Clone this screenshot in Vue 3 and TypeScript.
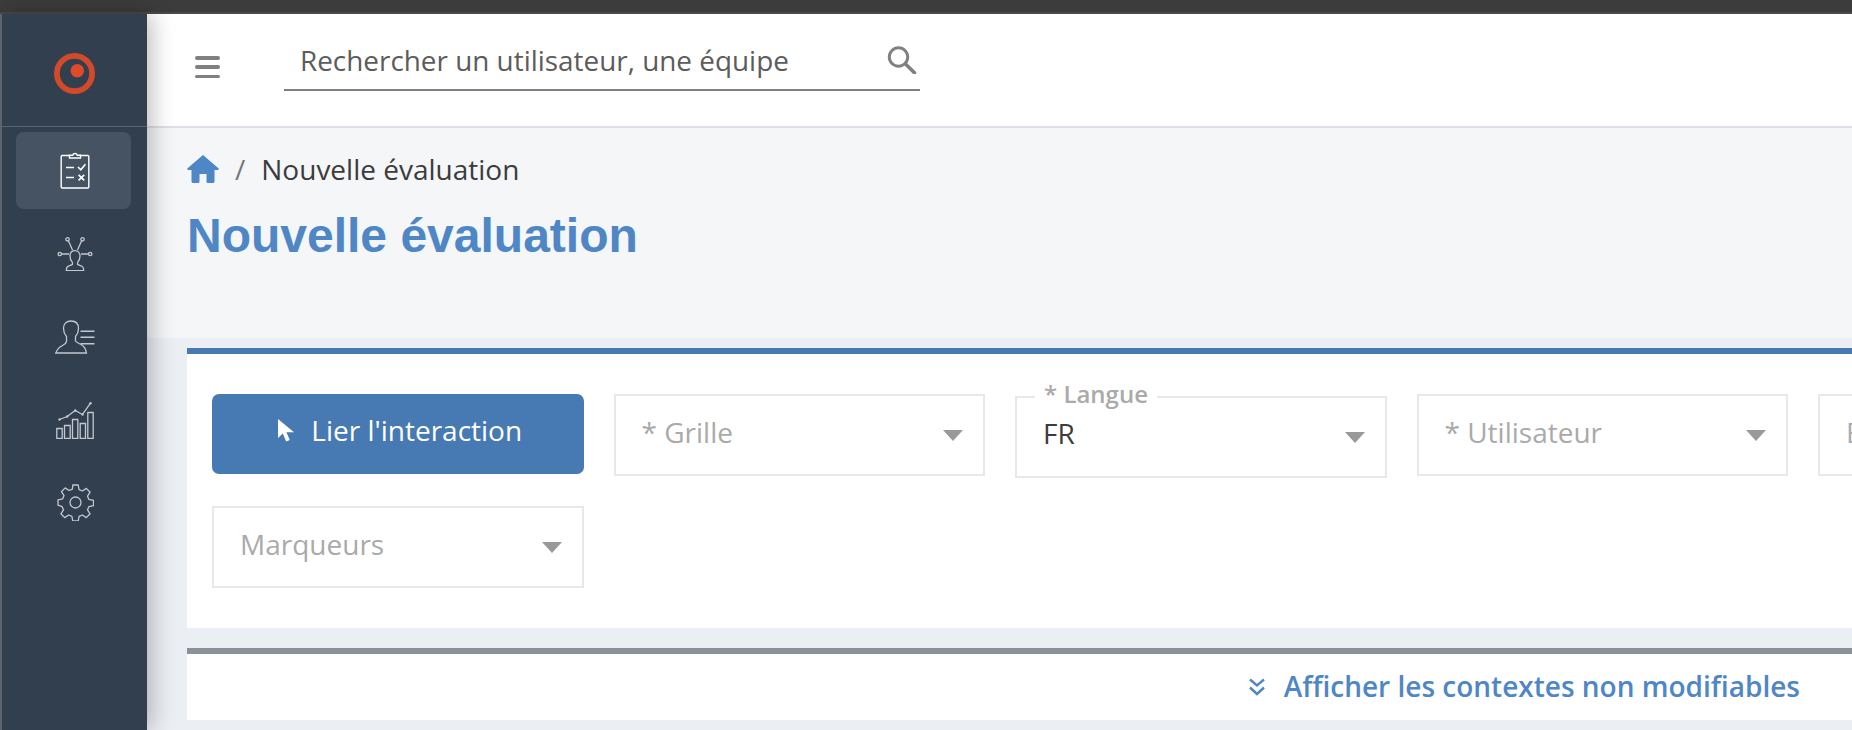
<script setup lang="ts">
interface Field { label: string; value?: string }
const firstRow: Field[] = [
  { label: '* Grille' },
  { label: '* Langue', value: 'FR' },
  { label: '* Utilisateur' },
  { label: 'Equipe' },
]
</script>

<template>
  <div class="app">
    <div class="topstrip"></div>
    <div class="shell">
      <aside class="sidebar">
        <div class="logo">
          <svg width="41" height="41" viewBox="0 0 40 40">
            <circle cx="20" cy="20" r="17.2" fill="none" stroke="#d24a2a" stroke-width="5.600" />
            <circle cx="22.7" cy="17.3" r="6.6" fill="#e0492a" />
          </svg>
        </div>
        <nav class="nav">
          <a class="nav-item active">
            <svg width="30" height="37" viewBox="0 0 30 37" fill="none" stroke="#fff" stroke-width="1.4">
              <path d="M10 3.5H2.2a1 1 0 0 0-1 1V35a1 1 0 0 0 1 1h25.6a1 1 0 0 0 1-1V4.5a1 1 0 0 0-1-1H20" />
              <path d="M9.5 6V3.2h3.2a2.4 2.4 0 0 1 4.6 0h3.2V6z" />
              <path d="M6 15.5h8M6 25.5h8" stroke-width="1.7" />
              <path d="m18 15 2.8 2.8 4.6-5.6M18.6 22.8l5.6 5.6M24.2 22.8l-5.6 5.6" stroke-width="1.7" />
            </svg>
          </a>
          <a class="nav-item">
            <svg width="36" height="35" viewBox="0 0 36 35" fill="none" stroke="#c3c8ce" stroke-width="1.3">
              <circle cx="10.500" cy="3.300" r="1.700" />
              <circle cx="25.500" cy="3.300" r="1.700" />
              <circle cx="2.800" cy="18" r="1.700" />
              <circle cx="33.200" cy="18" r="1.700" />
              <path d="m11.500 5 4 9M24.500 5l-4 9M4.600 18H12M24 18h7.400" />
              <path d="M18 14.700c-3 0-5 2-5 5.300 0 2.700 1 5 2.400 6.400v2c-1.600 1-4.200 1.200-5.200 2.600-.7 1-.9 2.400-.9 3.700h17.400c0-1.300-.2-2.700-.9-3.700-1-1.400-3.600-1.600-5.200-2.600v-2c1.400-1.400 2.400-3.700 2.400-6.400 0-3.300-2-5.300-5-5.300z" />
            </svg>
          </a>
          <a class="nav-item">
            <svg width="40" height="34" viewBox="0 0 40 34" fill="none" stroke="#c3c8ce" stroke-width="1.3">
              <path d="M11.500 16.500c-1.700-2-3-4.500-3-8C8.500 3.700 11.500 1 16 1s7.500 2.700 7.500 7.500c0 3.500-1.300 6-3 8V21c1 1.500 3.500 2.500 5.500 3.500 2.500 1.200 4.500 3 5.500 8.500H.8c1.500-4 4-6.300 6.700-7.500 2.200-1 3.500-1.700 4-4z" />
              <path d="M25.500 11.200h14M25.500 17.200h14M25.500 23.800h14" stroke-width="1.500" />
            </svg>
          </a>
          <a class="nav-item">
            <svg width="38" height="38" viewBox="0 0 38 38" fill="none" stroke="#c3c8ce" stroke-width="1.3">
              <path d="M.8 27.500h5.400v10H.8zM8.500 24.500h5.700v13H8.500zM16.500 18.500h5.300v19h-5.300zM24.200 22.500h5.300v15h-5.300zM31.800 11.500h5.400v26h-5.400z" />
              <path d="m3.500 18.500 7.700-3 8-6 7.300 4 8-11.300" />
              <g fill="#c3c8ce" stroke="none">
                <circle cx="3.500" cy="18.500" r="1.200" /><circle cx="11.200" cy="15.500" r="1.200" />
                <circle cx="19.200" cy="9.500" r="1.200" /><circle cx="26.500" cy="13.500" r="1.200" />
                <circle cx="34.500" cy="2.200" r="1.200" />
              </g>
            </svg>
          </a>
          <a class="nav-item">
            <svg width="37" height="37" viewBox="0 0 37 37" fill="none" stroke="#c3c8ce" stroke-width="1.300">
              <circle cx="18.500" cy="18.500" r="5.500" />
              <path d="M15.800 1h5.400l.9 4.600 3.300 1.400 3.900-2.600 3.800 3.800-2.600 3.900 1.400 3.300 4.600.9v5.400l-4.600.9-1.400 3.300 2.600 3.900-3.800 3.800-3.900-2.600-3.300 1.400-.9 4.600h-5.400l-.9-4.600-3.300-1.400-3.900 2.600-3.800-3.800 2.600-3.900-1.400-3.300L1 21.200v-5.400l4.600-.9L7 11.600 4.400 7.700l3.800-3.800 3.900 2.600 3.300-1.400z" stroke-linejoin="round" />
            </svg>
          </a>
        </nav>
      </aside>

      <main class="main">
        <header class="header">
          <button class="burger" aria-label="Menu"><span></span><span></span><span></span></button>
          <div class="search">
            <span class="search-text">Rechercher un utilisateur, une équipe</span>
            <svg width="30" height="28" viewBox="0 0 30 28" fill="none" stroke="#808080">
              <circle cx="11.500" cy="11" r="9.200" stroke-width="3" />
              <path d="m18.500 18 9 8.800" stroke-width="3.600" stroke-linecap="round" />
            </svg>
          </div>
        </header>

        <section class="page-head">
          <div class="crumbs">
            <svg width="32" height="28" viewBox="0 0 32 28" fill="#4f86c6">
              <path d="M16 0 31.400 13.200a1 1 0 0 1-.6 1.800H27.500v11.500A1.500 1.500 0 0 1 26 28h-5a1.500 1.500 0 0 1-1.500-1.500V19h-7v7.500A1.500 1.500 0 0 1 11 28H6a1.500 1.500 0 0 1-1.500-1.500V15H1.200a1 1 0 0 1-.6-1.800z" />
            </svg>
            <span class="slash">/</span>
            <span class="crumb">Nouvelle évaluation</span>
          </div>
          <h1 class="title">Nouvelle évaluation</h1>
        </section>

        <section class="content">
          <div class="card card-form">
            <div class="form-grid">
              <button class="link-btn">
                <svg width="18" height="24" viewBox="0 0 18 24" fill="#fff">
                  <path d="M1 1v19l4.800-4.400 3.400 8 3.600-1.500-3.400-7.800H17z" />
                </svg>
                <span>Lier l'interaction</span>
              </button>
              <div
                v-for="f in firstRow"
                :key="f.label"
                class="field"
                :class="{ filled: f.value }"
              >
                <span v-if="f.value" class="legend">{{ f.label }}</span>
                <span class="field-text" :class="{ value: f.value }">{{ f.value ?? f.label }}</span>
                <i class="caret"></i>
              </div>
              <div class="field">
                <span class="field-text">Marqueurs</span>
                <i class="caret"></i>
              </div>
            </div>
          </div>

          <div class="card card-more">
            <svg width="18" height="18" viewBox="0 0 18 18" fill="none" stroke="#4f86c6" stroke-width="2.400">
              <path d="m2 1.500 7 6 7-6M2 9.500l7 6.500 7-6.500" />
            </svg>
            <span class="more-text">Afficher les contextes non modifiables</span>
          </div>
        </section>
      </main>
    </div>
  </div>
</template>

<style>
html, body { margin: 0; height: 100%; overflow: hidden; }
</style>

<style scoped>
.app {
  width: 1852px;
  height: 730px;
  display: flex;
  flex-direction: column;
  overflow: hidden;
  font-family: "Open Sans", "Liberation Sans", sans-serif;
  background: #ebeef3;
}
.topstrip {
  height: 12px;
  flex: none;
  background: #3c3c3c;
  border-bottom: 2px solid #4a4a4a;
}
.shell { flex: 1; display: flex; min-height: 0; }

.sidebar {
  width: 145px;
  flex: none;
  background: #323f4f;
  border-left: 2px solid #5a636e;
  position: relative;
  z-index: 2;
  box-shadow: 4px 0 22px rgba(0, 0, 0, 0.28);
}
.logo {
  height: 113px;
  box-sizing: border-box;
  border-bottom: 1px solid #5a6470;
  display: flex;
  align-items: center;
  justify-content: center;
  padding-top: 7px;
}
.nav {
  display: flex;
  flex-direction: column;
  gap: 6px;
  padding: 5px 14px 0;
}
.nav-item {
  height: 77px;
  box-sizing: border-box;
  border-radius: 8px;
  display: flex;
  align-items: center;
  justify-content: center;
  width: 115px;
  padding-left: 3px;
}
.nav-item.active { background: #465362; }

.main { flex: 1; min-width: 0; display: flex; flex-direction: column; }
.header {
  height: 112px;
  flex: none;
  background: #fff;
  border-bottom: 2px solid #dde1e7;
  display: flex;
  align-items: flex-start;
  padding-left: 48px;
}
.burger {
  width: 25px;
  height: 22px;
  margin-top: 42px;
  padding: 0;
  border: 0;
  background: none;
  display: flex;
  flex-direction: column;
  justify-content: space-between;
}
.burger span {
  display: block;
  height: 3.500px;
  border-radius: 2px;
  background: #808080;
}
.search {
  width: 636px;
  height: 77px;
  margin-left: 64px;
  box-sizing: border-box;
  border-bottom: 2px solid #808080;
  display: flex;
  align-items: flex-start;
  justify-content: space-between;
  padding: 0 3px 0 16px;
}
.search-text {
  font-size: 27.900px;
  line-height: 34px;
  margin-top: 29px;
  color: #5c5c5c;
}
.search svg { margin-top: 32px; }

.page-head {
  height: 210px;
  flex: none;
  box-sizing: border-box;
  background: #f4f6f8;
  padding: 27px 0 0 40px;
}
.crumbs { display: flex; align-items: center; height: 28px; }
.slash { margin-left: 16px; font-size: 28px; color: #777; }
.crumb { margin-left: 16px; font-size: 28px; color: #3c3c3c; }
.title {
  margin: 23px 0 0 0;
  font-family: "Liberation Sans", Arial, sans-serif;
  font-size: 48px;
  line-height: 60px;
  font-weight: 700;
  color: #4f86c6;
}

.content { flex: 1; padding: 10px 0 0 40px; min-height: 0; }
.card { background: #fff; box-sizing: border-box; }
.card-form {
  height: 280px;
  border-top: 6px solid #4779b3;
  padding: 40px 0 0 25px;
}
.form-grid {
  display: grid;
  grid-template-columns: repeat(5, 371.500px);
  column-gap: 30px;
  row-gap: 28px;
  align-items: start;
}
.link-btn {
  height: 80px;
  border: 0;
  border-radius: 7px;
  background: #4779b3;
  color: #fff;
  font: 400 28px "Open Sans", sans-serif;
  display: flex;
  align-items: center;
  justify-content: center;
  gap: 16px;
  padding: 0 0 9px 4px;
}
.field {
  height: 82px;
  box-sizing: border-box;
  border: 2px solid #e8e8e8;
  position: relative;
  display: flex;
  align-items: center;
  padding: 0 20px 0 26px;
}
.field-text { font-size: 28px; color: #aaa; white-space: nowrap; margin-top: -6px; }
.field-text.value { color: #3c3c3c; }
.caret {
  margin-left: auto;
  width: 0;
  height: 0;
  border-left: 10px solid transparent;
  border-right: 10px solid transparent;
  border-top: 11px solid #999;
}
.field:last-child { grid-column: 1; }
.field.filled { margin-top: 2px; }
.field.filled .field-text { margin-top: -8px; }
.legend {
  position: absolute;
  left: 18px;
  top: -19px;
  padding: 0 9px;
  background: #fff;
  font-size: 24px;
  line-height: 30px;
  font-weight: 600;
  color: #aaa;
}

.card-more {
  height: 72px;
  margin-top: 20px;
  border-top: 6px solid #8a9199;
  display: flex;
  align-items: center;
  justify-content: flex-end;
  gap: 18px;
  padding-right: 52px;
}
.more-text { font-size: 28px; font-weight: 600; color: #4f86c6; margin-top: -2px; }
</style>
